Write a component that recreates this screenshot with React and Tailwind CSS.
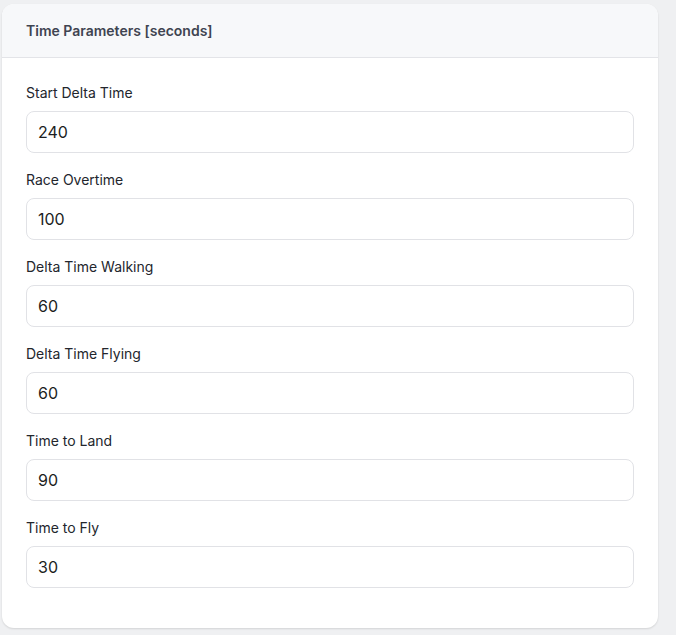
import React from 'react';

const fields = [
  { label: 'Start Delta Time', value: '240' },
  { label: 'Race Overtime', value: '100' },
  { label: 'Delta Time Walking', value: '60' },
  { label: 'Delta Time Flying', value: '60' },
  { label: 'Time to Land', value: '90' },
  { label: 'Time to Fly', value: '30' },
];

export default function App() {
  return (
    <div
      className="min-h-screen bg-[#eff0f2] pt-[4px] pl-[2px] pr-[18px] pb-[7px]"
      style={{ fontFamily: 'Inter, "Noto Sans", sans-serif' }}
    >
      <div className="bg-white rounded-[12px] shadow-[0_1px_2px_rgba(0,0,0,0.12)] overflow-hidden">
        {/* Header */}
        <div className="h-[54px] bg-[#f7f8fa] border-b border-[#e3e4e8] flex items-center px-[24px]">
          <h3 className="text-[14px] font-semibold text-[#3f4451]">Time Parameters [seconds]</h3>
        </div>

        {/* Fields */}
        <div className="px-[24px] pt-[26px] pb-[40px] flex flex-col gap-[18px]">
          {fields.map((f) => (
            <div key={f.label} className="flex flex-col">
              <label className="text-[14px] leading-[18px] text-[#23262d] mb-[9px]">{f.label}</label>
              <input
                type="text"
                defaultValue={f.value}
                className="h-[42px] w-full rounded-[8px] border border-[#e1e2e6] bg-white px-[11px] text-[16px] text-[#1c1e22] focus:outline-none"
              />
            </div>
          ))}
        </div>
      </div>
    </div>
  );
}
